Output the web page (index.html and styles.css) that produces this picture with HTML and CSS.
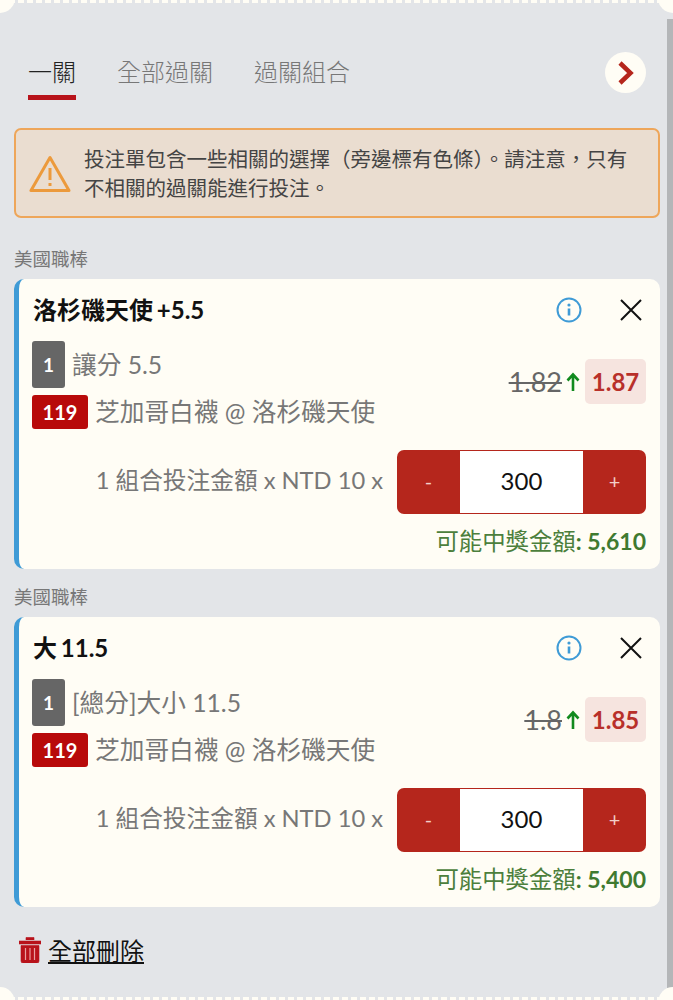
FILE: index.html
```html
<!DOCTYPE html>
<html lang="zh-Hant">
<head>
<meta charset="UTF-8">
<meta name="viewport" content="width=device-width, initial-scale=1.0">
<title>投注單</title>
<link rel="stylesheet" href="styles.css">
</head>
<body>
<div class="slip">
  <div class="scrollbar"></div>
  <div class="edge edge-top"></div>

  <div class="tabs">
    <div class="tab active">一關</div>
    <div class="tab">全部過關</div>
    <div class="tab">過關組合</div>
    <div class="tab-next">
      <svg width="18" height="26" viewBox="0 0 18 26"><path d="M3 3l10.500 10L3 23" fill="none" stroke="#b5261c" stroke-width="4.5"/></svg>
    </div>
  </div>

  <div class="alert">
    <svg class="alert-icon" width="42" height="38" viewBox="0 0 42 38"><path d="M21 2.500L2 35.500h38z" fill="none" stroke="#ec9a3c" stroke-width="3" stroke-linejoin="round"/><path d="M21 13v12M21 28v3" fill="none" stroke="#ec9a3c" stroke-width="3"/></svg>
    <p>投注單包含一些相關的選擇（旁邊標有色條）。請注意，只有不相關的過關能進行投注。</p>
  </div>

  <div class="league">美國職棒</div>
  <div class="card">
    <div class="card-head">
      <div class="pick">洛杉磯天使 +5.5</div>
      <svg class="info" width="26" height="26" viewBox="0 0 26 26"><circle cx="13" cy="13" r="11.5" fill="none" stroke="#3f9bd6" stroke-width="2"/><path d="M13 11.500v7" stroke="#3f9bd6" stroke-width="2.600"/><circle cx="13" cy="8" r="1.600" fill="#3f9bd6"/></svg>
      <svg class="close" width="24" height="24" viewBox="0 0 24 24"><path d="M2 2l20 20M22 2L2 22" stroke="#111" stroke-width="2"/></svg>
    </div>
    <div class="card-mid">
      <div class="details">
        <div class="line"><span class="badge-grey">1</span><span class="market">讓分 5.5</span></div>
        <div class="line"><span class="badge-red">119</span><span class="teams">芝加哥白襪 @ 洛杉磯天使</span></div>
      </div>
      <div class="odds">
        <s class="old">1.82</s>
        <svg width="14" height="20" viewBox="0 0 14 20"><path d="M7 19V3M1.500 8.500L7 2.500l5.500 6" fill="none" stroke="#128a1e" stroke-width="2.600"/></svg>
        <span class="new">1.87</span>
      </div>
    </div>
    <div class="stake-row">
      <span class="stake-label">1 組合投注金額 x NTD 10 x</span>
      <div class="stepper"><span class="step">-</span><span class="amount">300</span><span class="step">+</span></div>
    </div>
    <div class="payout">可能中獎金額<b>: 5,610</b></div>
  </div>

  <div class="league">美國職棒</div>
  <div class="card">
    <div class="card-head">
      <div class="pick">大 11.5</div>
      <svg class="info" width="26" height="26" viewBox="0 0 26 26"><circle cx="13" cy="13" r="11.5" fill="none" stroke="#3f9bd6" stroke-width="2"/><path d="M13 11.500v7" stroke="#3f9bd6" stroke-width="2.600"/><circle cx="13" cy="8" r="1.600" fill="#3f9bd6"/></svg>
      <svg class="close" width="24" height="24" viewBox="0 0 24 24"><path d="M2 2l20 20M22 2L2 22" stroke="#111" stroke-width="2"/></svg>
    </div>
    <div class="card-mid">
      <div class="details">
        <div class="line"><span class="badge-grey">1</span><span class="market">[總分]大小 11.5</span></div>
        <div class="line"><span class="badge-red">119</span><span class="teams">芝加哥白襪 @ 洛杉磯天使</span></div>
      </div>
      <div class="odds">
        <s class="old">1.8</s>
        <svg width="14" height="20" viewBox="0 0 14 20"><path d="M7 19V3M1.500 8.500L7 2.500l5.500 6" fill="none" stroke="#128a1e" stroke-width="2.600"/></svg>
        <span class="new">1.85</span>
      </div>
    </div>
    <div class="stake-row">
      <span class="stake-label">1 組合投注金額 x NTD 10 x</span>
      <div class="stepper"><span class="step">-</span><span class="amount">300</span><span class="step">+</span></div>
    </div>
    <div class="payout">可能中獎金額<b>: 5,400</b></div>
  </div>

  <div class="delete-all">
    <svg width="22" height="27" viewBox="0 0 22 27"><path d="M7 4V1.500h8V4M0 5h22v3H0zM2 9.500h18V25a2 2 0 0 1-2 2H4a2 2 0 0 1-2-2z" fill="#b8131b" stroke="#b8131b" stroke-width="0.600"/><path d="M6.500 12v12M11 12v12M15.500 12v12" stroke="#e9a0a0" stroke-width="1.200"/></svg>
    <span>全部刪除</span>
  </div>

  <div class="edge edge-bottom"></div>
</div>
</body>
</html>
```

FILE: styles.css
```css
* {
  box-sizing: border-box;
}
html, body {
  margin: 0;
  padding: 0;
  background-color: #fffdf5;
}
body {
  font-family: Lato, "Noto Sans CJK TC", sans-serif;
  color: #666;
}
.slip {
  position: relative;
  height: 1000px;
  overflow: hidden;
  background-color: #e3e5e8;
  padding: 48px 13px 0 14px;
}
.scrollbar {
  position: absolute;
  top: 19px;
  right: 0;
  bottom: 0;
  width: 6px;
  background-color: #b4b6b8;
}

/* ticket edge, the dots along top and bottom */
.edge {
  position: absolute;
  left: 0;
  right: 0;
  height: 3px;
  background-image: repeating-linear-gradient(90deg, #fffdf5 0 6px, #e3e5e8 6px 9px);
}
.edge::before, .edge::after {
  content: "";
  position: absolute;
  width: 30px;
  height: 30px;
  border-radius: 50%;
  background-color: #fffdf5;
}
.edge::before {
  left: -15px;
}
.edge::after {
  right: -15px;
}
.edge-top {
  top: 0;
}
.edge-top::before, .edge-top::after {
  top: -17px;
}
.edge-bottom {
  bottom: 0;
}
.edge-bottom::before, .edge-bottom::after {
  bottom: -17px;
}

.tabs {
  display: flex;
  align-items: flex-start;
  gap: 41px;
  height: 53px;
  padding-left: 14px;
  padding-right: 14px;
}
.tab {
  font-size: 24px;
  line-height: 47px;
  height: 52px;
  color: #777;
  font-weight: 300;
}
.tab.active {
  color: #222;
  border-bottom: 5px solid #b8131b;
}
.tab-next {
  margin-left: auto;
  width: 41px;
  height: 41px;
  margin-top: 4px;
  border-radius: 50%;
  background-color: #fffdf5;
  display: flex;
  align-items: center;
  justify-content: center;
}

.alert {
  margin-top: 27px;
  height: 90px;
  display: flex;
  align-items: center;
  gap: 13px;
  padding: 1px 24px 0 13px;
  background-color: #eaddd0;
  border: 2px solid #eea65a;
  border-radius: 7px;
}
.alert-icon {
  flex: none;
}
.alert p {
  margin: 0;
  font-size: 20.500px;
  line-height: 29px;
  color: #444;
}

.league {
  font-size: 18.500px;
  line-height: 24px;
  color: #777;
}
.alert + .league {
  margin-top: 29px;
}
.card + .league {
  margin-top: 16px;
}
.card {
  height: 290px;
  margin-top: 8px;
  padding: 0 14px 0 13px;
  background-color: #fffdf5;
  border-left: 5px solid #3f9bd6;
  border-radius: 10px;
  display: flex;
  flex-direction: column;
}
.card-head {
  display: flex;
  align-items: center;
  height: 62px;
  flex: none;
}
.pick {
  flex: 1;
  margin-left: 1px;
  padding-bottom: 4px;
  font-size: 24px;
  word-spacing: -2px;
  font-weight: 700;
  color: #111;
}
.close {
  margin-left: 37px;
  margin-right: 3px;
}
.card-mid {
  display: flex;
  justify-content: space-between;
}
.details {
  display: flex;
  flex-direction: column;
  gap: 7px;
}
.line {
  display: flex;
  align-items: center;
  font-size: 24.700px;
  line-height: 30px;
  color: #777;
}
.badge-grey {
  width: 33px;
  height: 47px;
  border-radius: 3px;
  background-color: #666;
  color: #fff;
  font-size: 19px;
  font-weight: 700;
  display: flex;
  align-items: center;
  justify-content: center;
}
.market {
  margin-left: 7px;
}
.badge-red {
  width: 56px;
  height: 34px;
  border-radius: 3px;
  background-color: #b80a0a;
  color: #fff;
  font-size: 20px;
  font-weight: 700;
  display: flex;
  align-items: center;
  justify-content: center;
}
.teams {
  margin-left: 7px;
}
.odds {
  display: flex;
  align-items: center;
  gap: 4px;
  align-self: flex-start;
  margin-top: 18px;
}
.old {
  font-size: 27px;
  color: #666;
}
.new {
  margin-left: 1px;
  width: 61px;
  height: 45px;
  background-color: #f6e4df;
  border-radius: 5px;
  color: #b8302a;
  font-size: 24px;
  font-weight: 700;
  display: flex;
  align-items: center;
  justify-content: center;
}
.stake-row {
  display: flex;
  justify-content: flex-end;
  align-items: center;
  gap: 14px;
  margin-top: 21px;
}
.stake-label {
  margin-bottom: 6px;
  font-size: 23.700px;
  color: #777;
}
.stepper {
  width: 249px;
  height: 64px;
  flex: none;
  display: flex;
  background-color: #b5261c;
  border-radius: 7px;
  padding: 1px 0;
}
.step {
  width: 63px;
  padding-bottom: 3px;
  color: #f3cfc9;
  font-size: 20px;
  display: flex;
  align-items: center;
  justify-content: center;
}
.amount {
  flex: 1;
  padding-bottom: 3px;
  background-color: #fff;
  color: #111;
  font-size: 24px;
  display: flex;
  align-items: center;
  justify-content: center;
}
.payout {
  margin-top: 9px;
  text-align: right;
  font-size: 23.400px;
  color: #4c7f3c;
}
.payout b {
  font-size: 23px;
  color: #3f7a30;
}

.delete-all {
  display: flex;
  align-items: center;
  gap: 7px;
  margin-top: 25px;
  padding-left: 5px;
  font-size: 24px;
  color: #111;
}
.delete-all span {
  text-decoration: underline;
}
```
